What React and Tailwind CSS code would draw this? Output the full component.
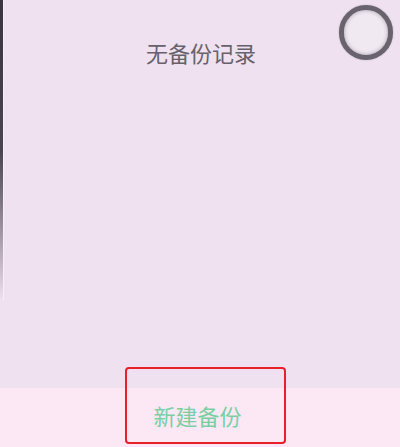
import React from "react";

export default function App() {
  const font = { fontFamily: '"Noto Sans CJK SC", "Noto Sans", sans-serif' };
  return (
    <div className="relative w-[400px] h-[447px] overflow-hidden bg-[#efe1ef]" style={font}>
      <div className="absolute left-0 top-0 w-[3px] h-[300px] bg-gradient-to-b from-[#3a3440] via-[#4a4350] to-[#efe1ef]" />
      <div className="absolute left-[3px] top-0 w-px h-[300px] bg-[#f7eef7]" />
      <div className="flex flex-col h-full">
        <div className="relative h-[388px] flex flex-col items-center pt-[37px]">
          <div className="text-[22px] leading-[30px] text-[#67616b] pl-[2px]">无备份记录</div>
          <div className="absolute right-[7px] top-[5px] w-[54px] h-[55px] rounded-full border-[5px] border-[#68636e] bg-[#f1e9f2] shadow-[inset_0_0_4px_rgba(0,0,0,0.3),0_0_2px_rgba(0,0,0,0.2)]" />
        </div>
        <div className="flex-1 bg-[#fbe8f4] flex justify-center pt-[12px]">
          <div className="text-[22px] leading-[30px] text-[#78d0a2] pr-[5px]">新建备份</div>
        </div>
      </div>
      <div className="absolute left-[125px] top-[367px] w-[161px] h-[77px] border-[2.5px] border-[#e8202a] rounded-[4px]" />
    </div>
  );
}
